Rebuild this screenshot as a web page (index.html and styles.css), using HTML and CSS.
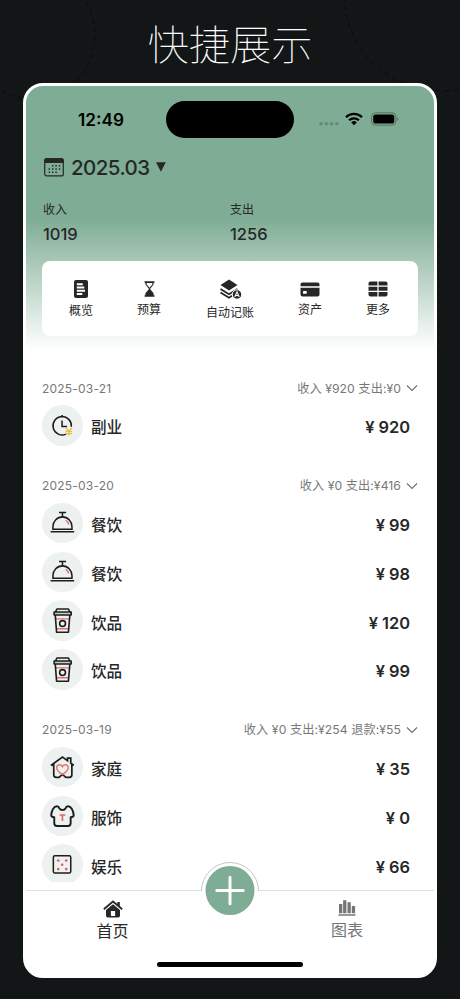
FILE: index.html
```html
<!DOCTYPE html>
<html lang="zh-CN">
<head>
<meta charset="utf-8">
<title>快捷展示</title>
<link rel="stylesheet" href="styles.css">
</head>
<body>
<svg class="defs" width="0" height="0">
  <symbol id="dish" viewBox="0 0 40 40"><g fill="none" stroke="#1c1e1e" stroke-width="1.5"><path d="M16.8 9.4h7M20.2 10v4"/><path d="M10.8 26v-2.5a9.4 9.8 0 0 1 18.8 0V26z"/><path d="M8.5 28.5h23.3"/></g><path d="M23.3 17.2c1.7.6 2.8 2 3.1 3.8" fill="none" stroke="#e4666a" stroke-width="1.4"/></symbol>
  <symbol id="cup" viewBox="0 0 40 40"><path d="M13.2 18.6h14.2M14 28.4h12.5" stroke="#e5706b" stroke-width="1.3"/><path d="M12 11.8h16.8v3H12z" fill="#c9cdcc"/><g fill="none" stroke="#1c1e1e" stroke-width="1.6" stroke-linejoin="round"><path d="M13.4 11.6l1.3-2.7h11.4l1.3 2.7M12 11.8h16.8v3H12zM13.1 15l1.3 16.8h11.7L27.5 15"/><circle cx="20.3" cy="23.3" r="2.9"/></g></symbol>
</svg>
<header class="banner">
  <svg class="rings" width="460" height="100" fill="none" stroke="#050808" stroke-width=".8" stroke-dasharray="5 4"><circle cx="32" cy="36" r="63"/><circle cx="441" cy="-6" r="97"/></svg>
  <h1>快捷展示</h1>
</header>
<main class="phone">
  <div class="status">
    <span class="time">12:49</span>
    <span class="island"></span>
    <span class="signals">
      <svg class="dots" width="21" height="12"><g fill="#678b77"><circle cx="2" cy="7.7" r="1.8"/><circle cx="7.3" cy="7.7" r="1.8"/><circle cx="12.6" cy="7.7" r="1.8"/><circle cx="17.9" cy="7.7" r="1.8"/></g></svg>
      <svg class="wifi" width="18" height="14" viewBox="0 0 18 14"><g fill="none" stroke="#000" stroke-width="2.3"><path d="M1 5.2a11.3 11.3 0 0 1 16 0M4.1 8.3a7 7 0 0 1 9.8 0"/></g><path d="M6.2 10.4a4 4 0 0 1 5.6 0L9 13.2z"/></svg>
      <svg class="battery" width="28" height="14"><rect x=".5" y=".8" width="24.5" height="12.4" rx="4" fill="none" stroke="#537260"/><rect x="2.2" y="2.5" width="21.1" height="9" rx="2.6"/><path d="M26.3 5.2c1.5.6 1.5 3 0 3.6z" fill="#537260"/></svg>
    </span>
  </div>
  <div class="month">
    <svg width="20" height="19" viewBox="0 0 20 19"><rect x=".7" y=".7" width="18.6" height="17.2" rx="2" fill="none" stroke="#262828" stroke-width="1.2"/><path d="M.3 5V2.3Q.3.2 2.5.2h15q2.2 0 2.2 2.1V5z" fill="#262828"/><g stroke="#262828" stroke-width="1.4" stroke-dasharray="1.4 2"><path d="M8 7.8h8.5M4.6 11h12M4.6 14.2h8.5"/></g></svg>
    <span>2025.03</span>
    <svg width="10" height="10"><path d="M0 .2h9.8L4.9 9.8z" fill="#262828"/></svg>
  </div>
  <div class="totals">
    <div><p>收入</p><strong>1019</strong></div>
    <div><p>支出</p><strong>1256</strong></div>
  </div>
  <nav class="tools">
    <a><svg width="14" height="18"><rect width="14" height="18" rx="2" fill="#262828"/><path d="M2.8 4.2h6M2.8 7.5h7.5M2.8 10.8h8.2M2.8 14h5.5" stroke="#fff" stroke-width="2"/></svg>概览</a>
    <a><svg width="11" height="16" viewBox="0 0 11 16"><path d="M.5 1h10M.5 15h10" stroke="#262828" stroke-width="1.7"/><path d="M1.4 1v2.5L5 8l-3.6 4.3V15h8.2v-2.7L6 8l3.6-4.5V1" fill="#262828"/><path d="M2.7 1.9h5.6v1.7L5.5 6.7 2.7 3.6z" fill="#fff"/></svg>预算</a>
    <a><svg width="24" height="21" viewBox="0 0 24 21"><path d="M2.5 6L11 .5 19.500 6 11 11.500z" fill="#262828"/><path d="M2.500 9.900l8.500 5.300 8.500-5.300M2.500 13.500l8.500 5.300 3-2" fill="none" stroke="#262828" stroke-width="1.800"/><circle cx="19" cy="15.500" r="4.700" fill="#262828" stroke="#fff"/><path d="M16.800 18l2.200-5.200 2.200 5.200M17.600 16.500h2.800" stroke="#fff" fill="none" stroke-width="1.100"/></svg>自动记账</a>
    <a><svg width="20" height="15"><path d="M.5 4.2V2.5Q.5.5 2.5.5h15q2 0 2 2v1.7zM.5 5.7h19v6.7q0 2-2 2h-15q-2 0-2-2z" fill="#262828"/><rect x="3" y="9" width="3.7" height="2.8" rx=".6" fill="#fff"/></svg>资产</a>
    <a><svg width="20" height="16"><rect x=".5" y=".5" width="19" height="15" rx="2" fill="#262828"/><path d="M10 0v16M0 5.2h20M0 10.4h20" stroke="#fff" stroke-width="1.2"/></svg>更多</a>
  </nav>
  <div class="records">
    <section>
      <h2><time>2025-03-21</time><span>收入 ¥920 支出:¥0</span><svg class="chev" viewBox="0 0 12 8"><path d="M1 1.5l5 5 5-5"/></svg></h2>
      <div class="row"><svg class="icon" viewBox="0 0 40 40"><path d="M20 9.8v2.6M19.8 15.3v5.9h5M29 21.5a9.1 9.1 0 1 0-5.2 7.3" fill="none" stroke="#1c1e1e" stroke-width="1.5"/><path d="M23.7 22.8l2.8 3.2 2.8-3.2M26.5 26v4.2M23.4 26.1h6.2M23.4 28.3h6.2" fill="none" stroke="#f2c04a" stroke-width="1.4"/></svg><b>副业</b><strong>¥ 920</strong></div>
    </section>
    <section>
      <h2><time>2025-03-20</time><span>收入 ¥0 支出:¥416</span><svg class="chev" viewBox="0 0 12 8"><path d="M1 1.5l5 5 5-5"/></svg></h2>
      <div class="row"><svg class="icon"><use href="#dish"/></svg><b>餐饮</b><strong>¥ 99</strong></div>
      <div class="row"><svg class="icon"><use href="#dish"/></svg><b>餐饮</b><strong>¥ 98</strong></div>
      <div class="row"><svg class="icon"><use href="#cup"/></svg><b>饮品</b><strong>¥ 120</strong></div>
      <div class="row"><svg class="icon"><use href="#cup"/></svg><b>饮品</b><strong>¥ 99</strong></div>
    </section>
    <section>
      <h2><time>2025-03-19</time><span>收入 ¥0 支出:¥254 退款:¥55</span><svg class="chev" viewBox="0 0 12 8"><path d="M1 1.5l5 5 5-5"/></svg></h2>
      <div class="row"><svg class="icon" viewBox="0 0 40 40"><path d="M8.8 18.2L20.2 10l5 3.5V11h3.2v4.8l3 2.4M11.600 17v10.500q0 2.500 2.500 2.500h2.700l3.400-3 3.400 3h3.400q2.500 0 2.500-2.500V17" fill="none" stroke="#1c1e1e" stroke-width="1.700"/><path d="M20.200 27.200c-3.400-2.300-5.700-4.300-5.700-6.800 0-3.300 4.200-4 5.700-1 1.500-3 5.700-2.300 5.700 1 0 2.500-2.300 4.500-5.700 6.800z" fill="none" stroke="#e17674" stroke-width="1.400"/></svg><b>家庭</b><strong>¥ 35</strong></div>
      <div class="row"><svg class="icon" viewBox="0 0 40 40"><path d="M14.800 10.200Q16.600 10.200 17.200 12.300Q18 13.800 20.200 13.800T23.200 12.300Q23.800 10.200 25.600 10.200C28.800 10.200 31 14.500 31.300 19.200Q31 20.700 28.300 21V27Q28.300 29.700 25.600 29.700H14.800Q12.100 29.700 12.100 27V21Q9.400 20.700 9.100 19.200C9.400 14.500 11.600 10.200 14.800 10.200Z" fill="none" stroke="#1c1e1e" stroke-width="1.900" stroke-linejoin="round"/><path d="M17.400 18.800h5.600M20.200 18.800v6" stroke="#df6561" stroke-width="1.600"/></svg><b>服饰</b><strong>¥ 0</strong></div>
      <div class="row"><svg class="icon" viewBox="0 0 40 40"><rect x="11.2" y="11.7" width="17.2" height="17" rx="1.6" fill="none" stroke="#1c1e1e" stroke-width="1.5"/><g fill="#dd605f"><circle cx="16" cy="16.3" r="1.3"/><circle cx="23.9" cy="16.3" r="1.3"/><circle cx="19.9" cy="20.5" r="1.3"/><circle cx="16" cy="24.8" r="1.3"/><circle cx="23.9" cy="24.8" r="1.3"/></g></svg><b>娱乐</b><strong>¥ 66</strong></div>
    </section>
  </div>
  <footer class="tabs">
    <a class="active"><svg width="20" height="18" viewBox="0 0 20 18"><path d="M.8 9.2L10 1.5l9.2 7.7" fill="none" stroke="#262828" stroke-width="1.8"/><path d="M14.3 2h2.5v5l-2.5-2z" fill="#262828"/><path fill-rule="evenodd" d="M3 10l7-5.8 7 5.8v5.7q0 1.8-1.8 1.8H4.8Q3 17.5 3 15.7zM7.9 11v4.9h4.2V11z" fill="#262828"/></svg>首页</a>
    <a><svg width="18" height="16"><path d="M.5 15h17" stroke="#737575" stroke-width="1.3"/><path d="M1 4h3.3v9.2H1zM5.1.3h3.3v12.900H5.1zM9.500 2.300h3.300v10.900H9.500zM13.800 6h3.300v7.200h-3.300z" fill="#737575"/></svg>图表</a>
    <svg class="add" width="58" height="54" viewBox="0 0 58 54"><path d="M.5 29a28.500 28.500 0 0 1 57 0" fill="#fff" stroke="#c4c6c5"/><circle cx="29" cy="28.500" r="24.500" fill="#7eac94"/><path d="M29 15.300v26.400M15.800 28.500h26.400" stroke="#fff" stroke-width="3" stroke-linecap="round"/></svg>
    <span class="home-bar"></span>
  </footer>
</main>
</body>
</html>
```
FILE: styles.css
```css
* { box-sizing: border-box; }
body {
  margin: 0;
  height: 999px;
  overflow: hidden;
  background: #121617;
  color: #262828;
  font-family: Inter, "Noto Sans CJK SC", sans-serif;
}
.defs { position: absolute; }
svg { display: block; flex: none; }
h1, h2, p { margin: 0; }
.banner { position: relative; height: 83px; }
.rings { position: absolute; left: 0; top: 0; }
.banner h1 {
  position: relative;
  padding-top: 12px;
  text-align: center;
  font: 100 41.3px/60px "Noto Sans CJK SC", sans-serif;
  color: #fff;
}
.phone {
  position: relative;
  width: 414px;
  height: 895px;
  margin-left: 23px;
  border: 3px solid #fff;
  border-radius: 20px;
  overflow: hidden;
  background: linear-gradient(#7eac94 0, #7eac94 132px, #fff 264px);
}
.status {
  display: grid;
  grid-template-columns: 140px 128px 140px;
  align-items: center;
  height: 66px;
}
.time { padding-left: 52px; font-size: 17.2px; font-weight: 600; color: #000; }
.island { height: 37px; border-radius: 19px; background: #000; }
.signals { display: flex; align-items: center; padding-left: 25px; }
.dots { margin-top: 6px; }
.wifi { margin-left: 5px; }
.battery { margin-left: 8px; }
.month { display: flex; align-items: center; height: 30px; padding-left: 18px; }
.month span { margin: 0 6px 0 7px; font-size: 20.5px; font-weight: 500; letter-spacing: -.55px; }
.totals { display: grid; grid-template-columns: 187px 1fr; padding: 20px 0 0 17px; }
.totals p { font-size: 12px; line-height: 16px; }
.totals strong { display: block; margin-top: 6px; font-size: 16.5px; line-height: 20px; font-weight: 500; }
.tools {
  display: grid;
  grid-template-columns: 78px 58px 104px 56px 80px;
  height: 75px;
  margin: 17px 16px 0;
  align-items: center;
  border-radius: 8px;
  background: #fff;
  font-size: 12px;
  line-height: 16px;
}
.tools a { display: flex; flex-direction: column; align-items: center; gap: 5px; padding-top: 2px; }
.records {
  height: 546px;
  padding: 44px 16px 0;
  overflow: hidden;
}
section { margin-bottom: 28px; }
h2 {
  display: flex;
  align-items: center;
  height: 16px;
  margin-bottom: 5px;
  color: #777979;
  font-size: 12px;
  font-weight: 400;
}
h2 span { margin: -1px 0 0 auto; font-size: 12.2px; letter-spacing: .07px; }
h2 time { letter-spacing: .2px; }
.chev { width: 12px; height: 8px; margin: 0 0 0 5px; fill: none; stroke: #6d6f6f; stroke-width: 1.1; }
.row { display: flex; align-items: center; height: 48.75px; padding-right: 8px; }
.icon { width: 40.5px; height: 40.5px; border-radius: 50%; background: #edf1f0; }
.row b { margin: 6px 0 0 8.5px; font-size: 15.6px; line-height: 22px; font-weight: 500; }
.row strong { margin: 4px 0 0 auto; font-size: 16.4px; font-weight: 600; }
.tabs {
  position: relative;
  display: grid;
  grid-template-columns: 173px 1fr;
  height: 85px;
  margin-top: 8px;
  border-top: 1px solid #dedfdf;
}
.tabs a { display: flex; flex-direction: column; align-items: center; gap: 3px; padding-top: 9px; font-size: 16px; line-height: 22px; color: #737575; }
.tabs a + a { padding-left: 61px; }
.tabs .active { gap: 2px; color: #262828; }
.add { position: absolute; left: 175px; top: -29px; }
.home-bar { position: absolute; left: 131px; top: 71px; width: 146px; height: 5px; border-radius: 3px; background: #000; }
```
